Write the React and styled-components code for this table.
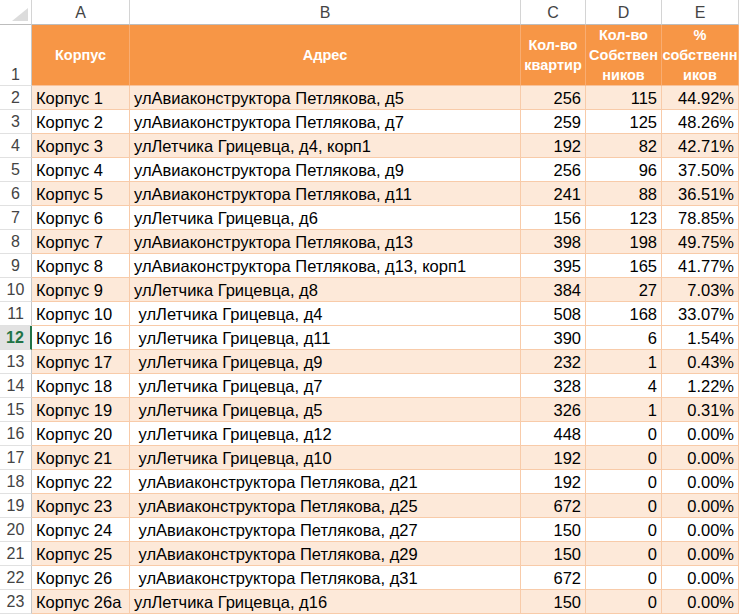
import React from "react";
import styled, { createGlobalStyle } from "styled-components";

const Global = createGlobalStyle`
  html, body { margin: 0; padding: 0; background: #fff; }
  body { font-family: "Liberation Sans", Arial, sans-serif; }
`;

const Sheet = styled.div`
  display: grid;
  grid-template-columns: 32px 98px 391px 65px 76px 77px;
  grid-template-rows: 25px 61px repeat(22, 24px);
  width: 739px;
  overflow: hidden;
  font-family: "Liberation Sans", Arial, sans-serif;
`;

const Corner = styled.div`
  position: relative;
  box-sizing: border-box;
  border-right: 1px solid #d4d4d4;
  border-bottom: 1px solid #bdbdbd;
  background: #fff;
  svg { position: absolute; right: 3px; bottom: 3px; }
`;

const ColHead = styled.div`
  box-sizing: border-box;
  border-right: 1px solid #d4d4d4;
  border-bottom: 1px solid #bdbdbd;
  background: #fff;
  color: #444;
  font-size: 16px;
  display: flex;
  align-items: center;
  justify-content: center;
  padding-top: 1px;
`;

const RowHead = styled.div`
  box-sizing: border-box;
  border-right: ${(p) => (p.$active ? "2px solid #217346" : "1px solid #c8c8c8")};
  border-bottom: 1px solid #e1e1e1;
  background: ${(p) => (p.$active ? "#e2e2e2" : "#fff")};
  color: ${(p) => (p.$active ? "#217346" : "#444")};
  font-weight: ${(p) => (p.$active ? "bold" : "normal")};
  font-size: 16px;
  display: flex;
  align-items: ${(p) => (p.$bottom ? "flex-end" : "center")};
  justify-content: center;
  padding-bottom: ${(p) => (p.$bottom ? "1px" : "0")};
`;

const HeadCell = styled.div`
  box-sizing: border-box;
  background: #f79646;
  border-right: 1px solid #f9ad72;
  border-bottom: 1px solid #f8c29a;
  color: #fff;
  font-weight: bold;
  font-size: 14.5px;
  line-height: 20px;
  display: flex;
  align-items: center;
  justify-content: center;
  text-align: center;
  padding: 0 2px;
  white-space: pre;
`;

const Cell = styled.div`
  box-sizing: border-box;
  background: ${(p) => (p.$shade ? "#fde9d9" : "#fff")};
  border-right: 1px solid #f8cba9;
  border-bottom: 1px solid #f8cba9;
  color: #000;
  font-size: 16.5px;
  display: flex;
  align-items: center;
  justify-content: ${(p) => (p.$num ? "flex-end" : "flex-start")};
  padding: 1px 4px 0 4px;
  white-space: pre;
  overflow: hidden;
`;

const cols = ["A", "B", "C", "D", "E"];
const heads = ["Корпус", "Адрес", "Кол-во\nквартир", "Кол-во\nСобствен\nников", "%\nсобственн\nиков"];

const rows = [
  ["Корпус 1", "улАвиаконструктора Петлякова, д5", 256, 115, "44.92%"],
  ["Корпус 2", "улАвиаконструктора Петлякова, д7", 259, 125, "48.26%"],
  ["Корпус 3", "улЛетчика Грицевца, д4, корп1", 192, 82, "42.71%"],
  ["Корпус 4", "улАвиаконструктора Петлякова, д9", 256, 96, "37.50%"],
  ["Корпус 5", "улАвиаконструктора Петлякова, д11", 241, 88, "36.51%"],
  ["Корпус 6", "улЛетчика Грицевца, д6", 156, 123, "78.85%"],
  ["Корпус 7", "улАвиаконструктора Петлякова, д13", 398, 198, "49.75%"],
  ["Корпус 8", "улАвиаконструктора Петлякова, д13, корп1", 395, 165, "41.77%"],
  ["Корпус 9", "улЛетчика Грицевца, д8", 384, 27, "7.03%"],
  ["Корпус 10", " улЛетчика Грицевца, д4", 508, 168, "33.07%"],
  ["Корпус 16", " улЛетчика Грицевца, д11", 390, 6, "1.54%"],
  ["Корпус 17", " улЛетчика Грицевца, д9", 232, 1, "0.43%"],
  ["Корпус 18", " улЛетчика Грицевца, д7", 328, 4, "1.22%"],
  ["Корпус 19", " улЛетчика Грицевца, д5", 326, 1, "0.31%"],
  ["Корпус 20", " улЛетчика Грицевца, д12", 448, 0, "0.00%"],
  ["Корпус 21", " улЛетчика Грицевца, д10", 192, 0, "0.00%"],
  ["Корпус 22", " улАвиаконструктора Петлякова, д21", 192, 0, "0.00%"],
  ["Корпус 23", " улАвиаконструктора Петлякова, д25", 672, 0, "0.00%"],
  ["Корпус 24", " улАвиаконструктора Петлякова, д27", 150, 0, "0.00%"],
  ["Корпус 25", " улАвиаконструктора Петлякова, д29", 150, 0, "0.00%"],
  ["Корпус 26", " улАвиаконструктора Петлякова, д31", 672, 0, "0.00%"],
  ["Корпус 26а", "улЛетчика Грицевца, д16", 150, 0, "0.00%"],
];

const whiteRows = new Set([3, 5, 7, 9, 11, 12, 14, 16, 18, 20, 22]);

export default function App() {
  return (
    <>
      <Global />
      <Sheet>
        <Corner>
          <svg width="16" height="13" viewBox="0 0 16 13">
            <polygon points="16,0 16,13 0,13" fill="#dcdcdc" />
          </svg>
        </Corner>
        {cols.map((c) => (
          <ColHead key={c}>{c}</ColHead>
        ))}
        <RowHead $bottom>1</RowHead>
        {heads.map((h, i) => (
          <HeadCell key={i}>{h}</HeadCell>
        ))}
        {rows.map((r, i) => {
          const n = i + 2;
          const shade = !whiteRows.has(n);
          return (
            <React.Fragment key={n}>
              <RowHead $active={n === 12}>{n}</RowHead>
              <Cell $shade={shade}>{r[0]}</Cell>
              <Cell $shade={shade}>{r[1]}</Cell>
              <Cell $shade={shade} $num>{r[2]}</Cell>
              <Cell $shade={shade} $num>{r[3]}</Cell>
              <Cell $shade={shade} $num>{r[4]}</Cell>
            </React.Fragment>
          );
        })}
      </Sheet>
    </>
  );
}
